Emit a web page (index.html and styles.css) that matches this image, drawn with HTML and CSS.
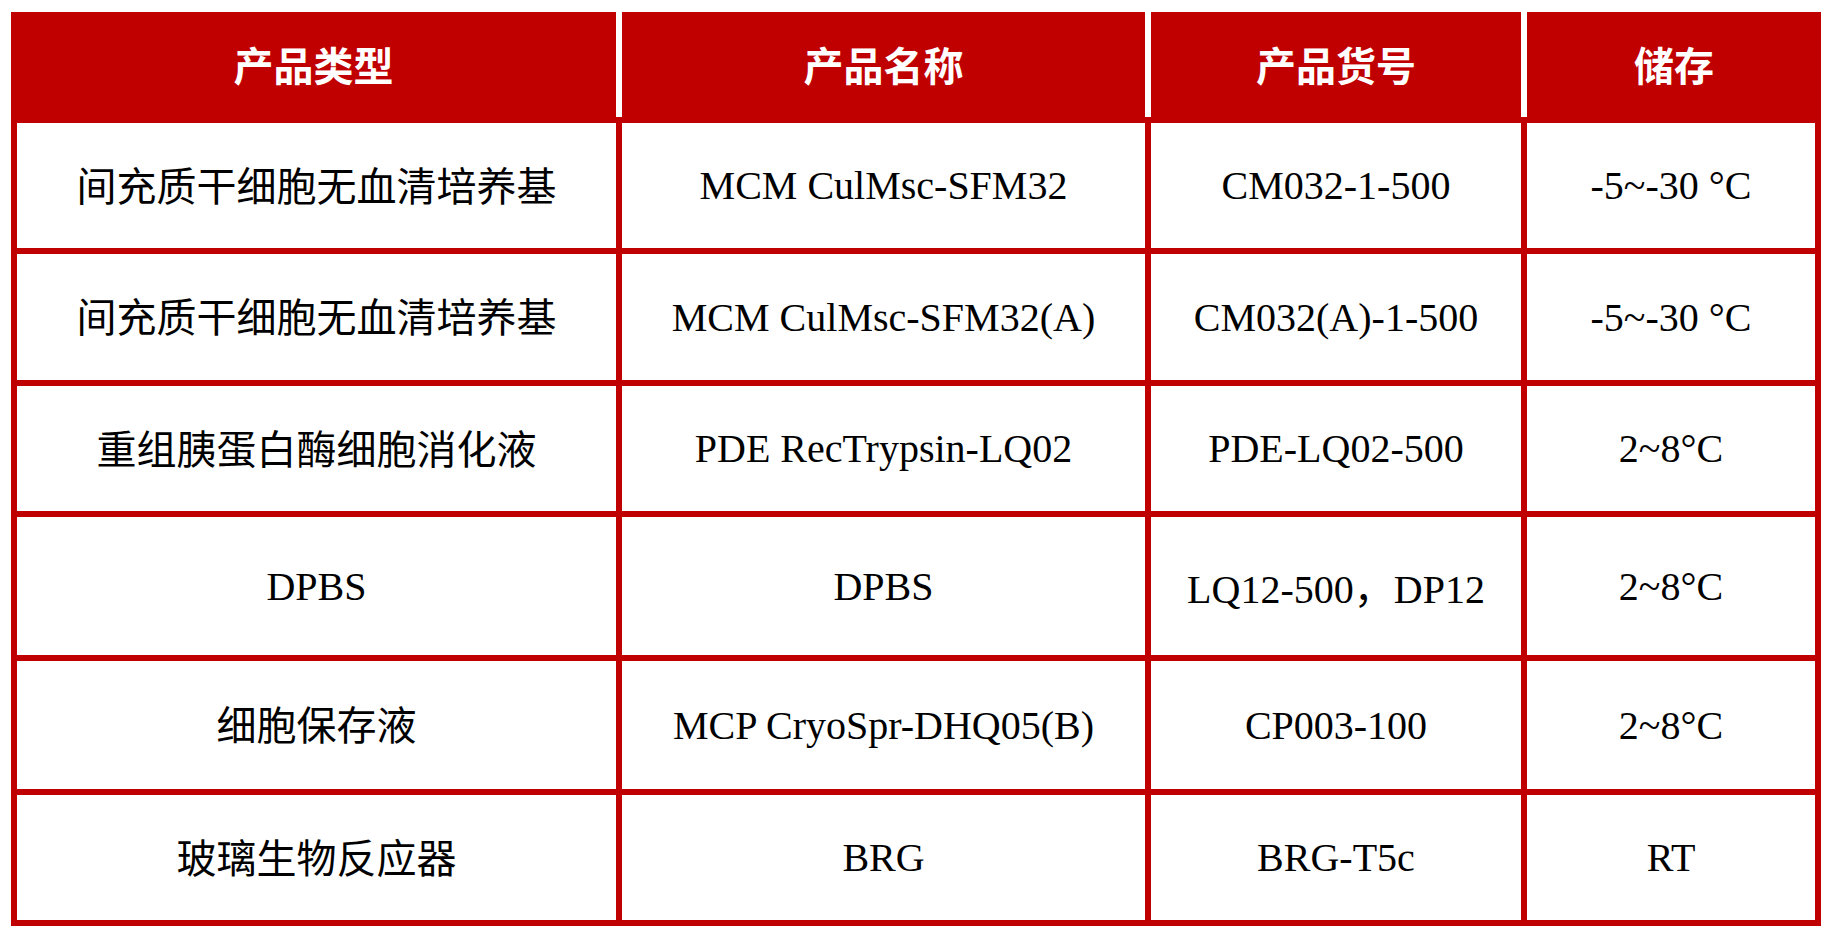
FILE: index.html
```html
<!DOCTYPE html>
<html lang="zh-CN">
<head>
<meta charset="utf-8">
<title>产品列表</title>
<link rel="stylesheet" href="styles.css">
</head>
<body>
<div class="table">
  <div class="th first">产品类型</div>
  <div class="th">产品名称</div>
  <div class="th">产品货号</div>
  <div class="th last">储存</div>

  <div class="td cjk">间充质干细胞无血清培养基</div>
  <div class="td">MCM CulMsc-SFM32</div>
  <div class="td">CM032-1-500</div>
  <div class="td">-5~-30 °C</div>

  <div class="td cjk">间充质干细胞无血清培养基</div>
  <div class="td">MCM CulMsc-SFM32(A)</div>
  <div class="td">CM032(A)-1-500</div>
  <div class="td">-5~-30 °C</div>

  <div class="td cjk">重组胰蛋白酶细胞消化液</div>
  <div class="td">PDE RecTrypsin-LQ02</div>
  <div class="td">PDE-LQ02-500</div>
  <div class="td">2~8°C</div>

  <div class="td">DPBS</div>
  <div class="td">DPBS</div>
  <div class="td">LQ12-500，DP12</div>
  <div class="td">2~8°C</div>

  <div class="td cjk">细胞保存液</div>
  <div class="td">MCP CryoSpr-DHQ05(B)</div>
  <div class="td">CP003-100</div>
  <div class="td">2~8°C</div>

  <div class="td cjk">玻璃生物反应器</div>
  <div class="td">BRG</div>
  <div class="td">BRG-T5c</div>
  <div class="td">RT</div>
</div>
</body>
</html>
```

FILE: styles.css
```css
html, body {
  margin: 0;
  padding: 0;
  background: #ffffff;
}

body {
  padding: 12px 0 0 11px;
}

.table {
  display: grid;
  width: max-content;
  grid-template-columns: 599px 523px 370px 288px;
  grid-template-rows: 105px 125px 126px 125px 138px 128px 125px;
  gap: 6px;
  background: #c00000;
  border: 6px solid #c00000;
  border-top: 0;
}

.th,
.td {
  display: flex;
  align-items: center;
  justify-content: center;
  text-align: center;
  white-space: nowrap;
}

.th {
  background: #c00000;
  color: #ffffff;
  font-family: "Noto Sans CJK SC", sans-serif;
  font-weight: 700;
  font-size: 40px;
  padding-bottom: 2px;
  border-right: 6px solid #ffffff;
  margin-right: -6px;
}

.th.first {
  margin-left: -6px;
}

.th.last {
  border-right: 0;
  margin-right: -6px;
}

.td {
  background: #ffffff;
  color: #000000;
  font-family: "Liberation Serif", "Noto Sans CJK SC", serif;
  font-size: 40px;
}

.td.cjk {
  font-family: "Noto Sans CJK SC", sans-serif;
  font-size: 40px;
  padding-bottom: 4px;
}
```
